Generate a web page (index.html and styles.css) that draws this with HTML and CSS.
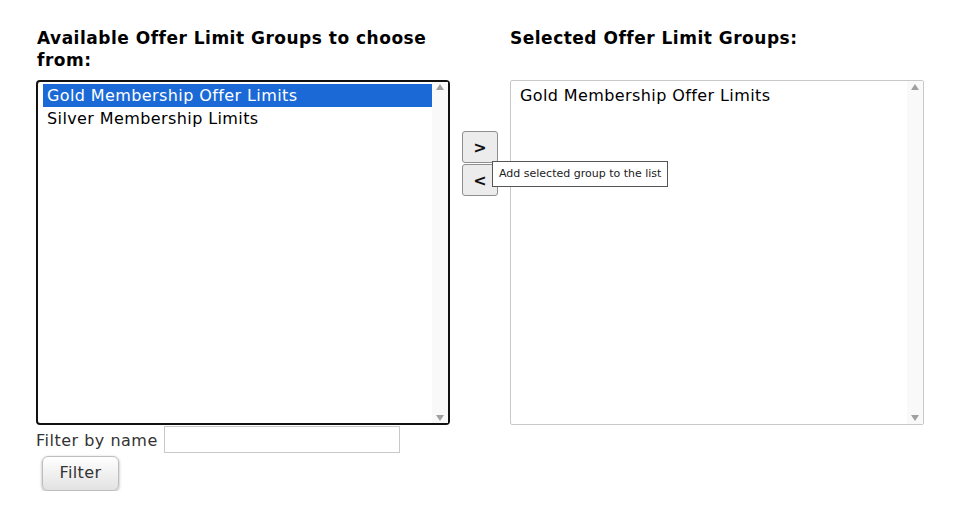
FILE: index.html
```html
<!DOCTYPE html>
<html>
<head>
<meta charset="utf-8">
<link rel="stylesheet" href="styles.css">
</head>
<body>
<div class="page">
  <div class="picker">
    <div class="col">
      <h3 class="title">Available Offer Limit Groups to choose from:</h3>
      <div class="listbox focused">
        <ul class="items">
          <li class="item selected">Gold Membership Offer Limits</li>
          <li class="item">Silver Membership Limits</li>
        </ul>
        <div class="scrollbar"><span class="tri up"></span><span class="tri down"></span></div>
      </div>
    </div>
    <div class="mid">
      <button class="move">&gt;</button>
      <button class="move">&lt;</button>
      <div class="tooltip">Add selected group to the list</div>
    </div>
    <div class="col">
      <h3 class="title right">Selected Offer Limit Groups:</h3>
      <div class="listbox plain">
        <ul class="items">
          <li class="item">Gold Membership Offer Limits</li>
        </ul>
        <div class="scrollbar"><span class="tri up"></span><span class="tri down"></span></div>
      </div>
    </div>
  </div>
  <div class="filter-row">
    <label class="filter-label">Filter by name</label>
    <input class="filter-input" type="text">
  </div>
  <button class="filter-btn">Filter</button>
</div>
</body>
</html>
```
FILE: styles.css
```css
html, body {
  margin: 0;
  padding: 0;
  background: #fff;
}
body {
  font-family: "DejaVu Sans", Verdana, sans-serif;
  color: #000;
}
.page {
  padding: 27px 0 0 36px;
}
.picker {
  display: grid;
  grid-template-columns: 414px 60px 414px;
  align-items: start;
}
.col {
  display: flex;
  flex-direction: column;
}
.title {
  margin: 0 0 9px 1px;
  font-size: 17px;
  line-height: 22px;
  font-weight: bold;
  letter-spacing: 0.5px;
  height: 44px;
  padding-right: 0;
}
.title.right {
  margin-left: 0;
}
.listbox {
  box-sizing: border-box;
  height: 345px;
  display: flex;
  background: #fff;
}
.listbox.focused {
  border: 2px solid #111;
  border-radius: 4px;
}
.listbox.plain {
  border: 1px solid #c8c8c8;
  border-radius: 2px;
}
.items {
  list-style: none;
  margin: 0;
  padding: 2px 0 0 5px;
  flex: 1;
}
.plain .items {
  padding: 3px 0 0 5px;
}
.item {
  font-size: 16px;
  line-height: 23px;
  height: 23px;
  padding-left: 4px;
  letter-spacing: 0.4px;
  white-space: nowrap;
}
.item.selected {
  background: #1a69d6;
  color: #fff;
}
.scrollbar {
  width: 16px;
  background: #f9f9f9;
  position: relative;
}
.tri {
  position: absolute;
  left: 4px;
  width: 0;
  height: 0;
  border-left: 4px solid transparent;
  border-right: 4px solid transparent;
}
.tri.up {
  top: 3px;
  border-bottom: 6px solid #a0a0a0;
}
.tri.down {
  bottom: 3px;
  border-top: 6px solid #a0a0a0;
}
.focused .tri.up { top: 2px; }
.focused .tri.down { bottom: 2px; }
.mid {
  position: relative;
  display: flex;
  flex-direction: column;
  padding: 104px 0 0 12px;
  gap: 1px;
}
.move {
  box-sizing: border-box;
  width: 36px;
  height: 32px;
  border: 1px solid #8f8f8f;
  border-radius: 3px;
  background: #ececec;
  font-family: "DejaVu Sans", Verdana, sans-serif;
  font-size: 16px;
  font-weight: bold;
  color: #111;
  padding: 0;
}
.tooltip {
  position: absolute;
  left: 42px;
  top: 134px;
  box-sizing: border-box;
  height: 26px;
  padding: 0 6px;
  border: 1px solid #555;
  background: #fff;
  font-size: 11px;
  line-height: 24px;
  color: #222;
  white-space: nowrap;
}
.filter-row {
  display: flex;
  align-items: flex-start;
  gap: 6px;
  height: 29px;
  margin-top: 1px;
}
.filter-label {
  font-size: 16px;
  line-height: 29px;
  letter-spacing: 0.5px;
  color: #333;
}
.filter-input {
  box-sizing: border-box;
  width: 236px;
  height: 27px;
  border: 1px solid #c8c8c8;
  margin: 0;
  padding: 0 4px;
  font-family: inherit;
  font-size: 14px;
}
.filter-btn {
  display: block;
  margin: 1px 0 0 6px;
  box-sizing: border-box;
  width: 77px;
  height: 35px;
  border: 1px solid #bdbdbd;
  border-radius: 6px;
  background: linear-gradient(#ffffff, #e2e2e2);
  box-shadow: 0 1px 3px rgba(0,0,0,0.35);
  font-family: "DejaVu Sans", Verdana, sans-serif;
  font-size: 16px;
  letter-spacing: 0.4px;
  color: #333;
  padding: 0 0 2px 0;
}
```
